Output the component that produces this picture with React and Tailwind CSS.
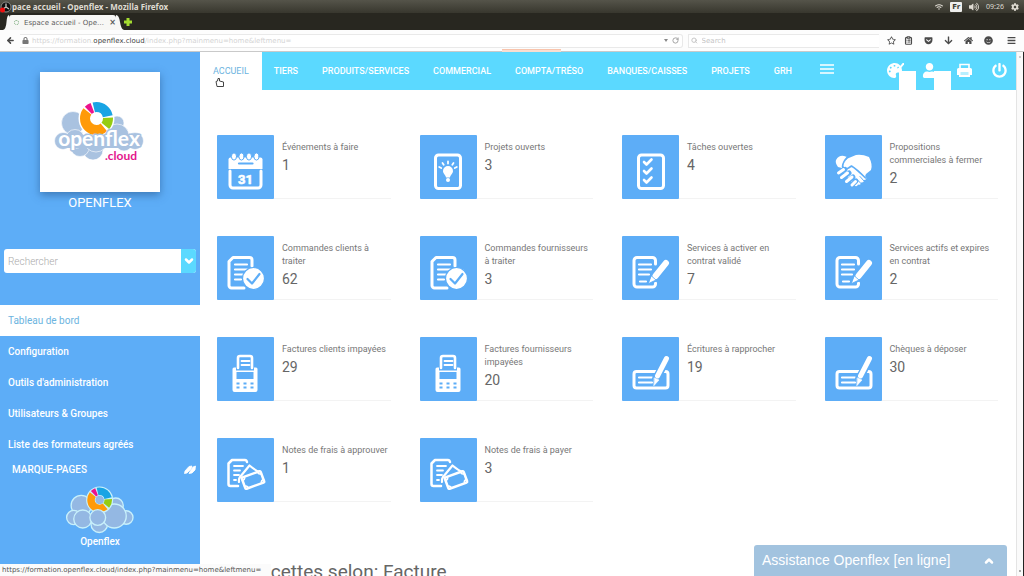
import React, { useState } from "react";
import { FaBars, FaHome, FaPowerOff, FaUser, FaLock, FaArrowDown, FaGetPocket, FaRegStar, FaPalette, FaCog, FaWifi, FaVolumeUp, FaSmile } from "react-icons/fa";
import { ArrowLeft, ChevronDown, ChevronUp, ClipboardList, RotateCw, Search } from "lucide-react";

const BLUE = "#5dadf7";

const NAV = ["TIERS", "PRODUITS/SERVICES", "COMMERCIAL", "COMPTA/TRÉSO", "BANQUES/CAISSES", "PROJETS", "GRH"];

const SIDE = ["Configuration", "Outils d'administration", "Utilisateurs & Groupes", "Liste des formateurs agréés"];

const CARDS = [
  { label: "Événements à faire", value: 1, icon: "calendar" },
  { label: "Projets ouverts", value: 3, icon: "idea" },
  { label: "Tâches ouvertes", value: 4, icon: "tasks" },
  { label: "Propositions commerciales à fermer", value: 2, icon: "deal" },
  { label: "Commandes clients à traiter", value: 62, icon: "order" },
  { label: "Commandes fournisseurs à traiter", value: 3, icon: "order" },
  { label: "Services à activer en contrat validé", value: 7, icon: "contract" },
  { label: "Services actifs et expires en contrat", value: 2, icon: "contract" },
  { label: "Factures clients impayées", value: 29, icon: "terminal" },
  { label: "Factures fournisseurs impayées", value: 20, icon: "terminal" },
  { label: "Écritures à rapprocher", value: 19, icon: "cheque" },
  { label: "Chèques à déposer", value: 30, icon: "cheque" },
  { label: "Notes de frais à approuver", value: 1, icon: "expense" },
  { label: "Notes de frais à payer", value: 3, icon: "expense" },
];

const ICONS = {
  calendar: (
    <>
      <path d="M13 36v14a3 3 0 0 0 3 3h25a3 3 0 0 0 3-3V36" />
      <path d="M11.500 34V24.500q0-2 2-2h30q2 0 2 2V34z" fill="#fff" stroke="none" />
      {[17, 24.5, 32, 39.5].map((x) => (
        <ellipse key={x} cx={x} cy="21.500" rx="2.600" ry="3.600" fill="#fff" stroke={BLUE} strokeWidth="1" />
      ))}
      <path d="M22 28.500h13.500" stroke={BLUE} strokeWidth="2.200" />
      <text x="28.500" y="48.500" textAnchor="middle" fill="#fff" stroke="#fff" strokeWidth="0.600" fontSize="13" fontWeight="700" fontFamily="Roboto, sans-serif">31</text>
    </>
  ),
  idea: (
    <>
      <rect x="15.500" y="20" width="25" height="33.500" rx="3" />
      <path d="M28 31a5 5 0 0 0-5 5c0 3 2.600 3.500 3 6.500h4c.4-3 3-3.500 3-6.500a5 5 0 0 0-5-5z" fill="#fff" stroke="none" />
      <circle cx="28" cy="45" r="2" fill="#fff" stroke="none" />
      <path d="M28 26.500v2M22.500 28l1.200 1.800M33.500 28l-1.200 1.800M19.200 32l2 1M36.800 32l-2 1" strokeWidth="1.800" />
    </>
  ),
  tasks: (
    <>
      <rect x="16.500" y="20" width="25" height="33.500" rx="3" />
      <path d="M22 27l2.500 2.500 5-5M22 36l2.500 2.500 5-5M22 45l2.500 2.500 5-5" strokeWidth="2.600" />
    </>
  ),
  deal: (
    <>
      <path d="M11 25q3-5 8-4l3 1-5 11-4-1q-3-4-2-7z" fill="#fff" stroke="none" />
      <path d="M18 31q2-7 7-8.500l6-2.500q6-1 13 2 4 8 2 13l-5 4q-3 8-6 6l-10-12q-4 3-6-1z" fill="#fff" stroke="none" />
      <path d="M17 35l4-3 8 1 12 9q1 3-2 3 0 3-3 2.500 0 3-3 2-1 3-4 1z" fill="#fff" stroke="none" />
      <path d="M22 22.500q-4 4-4.500 9 1 4 6 1.500l3-2q5 3 14 12" stroke={BLUE} strokeWidth="1.600" />
      <path d="M15 38l5-3.500M18 42.500l6-4.500M22 47l6-5M27 50l4-4" stroke={BLUE} strokeWidth="5" />
      <path d="M13.500 38l5-3.500M16.500 42.500l6-4.500M21.500 46.500l5.500-4.500M27 50l3.500-3.500" strokeWidth="3" />
      <path d="M32 44.500l5 5M35 41.500l4.500 5" stroke={BLUE} strokeWidth="1" />
    </>
  ),
  order: (
    <>
      <path d="M35 30v-6a2.500 2.500 0 0 0-2.500-2.500H16l-4 4V49.500A2.500 2.500 0 0 0 14.500 52H27" />
      <path d="M18 28.500h12M18 33.500h12M18 38.500h8M18 43.500h6" strokeWidth="2.200" />
      <circle cx="36.500" cy="42.500" r="11" fill="#fff" stroke={BLUE} strokeWidth="1.200" />
      <path d="M30.500 43l4.500 4.500 7.500-9.500" stroke={BLUE} strokeWidth="2.200" />
    </>
  ),
  contract: (
    <>
      <path d="M33.500 28v-3.500a3 3 0 0 0-3-3H15a3 3 0 0 0-3 3V48a3 3 0 0 0 3 3h15.500a3 3 0 0 0 3-3v-1" />
      <path d="M17 28.500h12M17 33.500h12M17 38.500h10M18 45.500h6" strokeWidth="2.200" />
      <path d="M44.500 27L32 42" stroke={BLUE} strokeWidth="8.500" />
      <path d="M44 27L33.500 40" strokeWidth="6" />
      <path d="M29.500 40l4.500 4-7.500 3.500z" fill="#fff" stroke={BLUE} strokeWidth="0.800" />
    </>
  ),
  terminal: (
    <>
      <path d="M21 31V21a2 2 0 0 1 2-2h10a2 2 0 0 1 2 2v10" strokeWidth="2.600" />
      <path d="M24.500 24h8M24.500 28h8" strokeWidth="1.800" />
      <path d="M17 30.500h2v3h18v-3h2q1.500 0 1.500 1.500v21q0 2-2 2h-21q-2 0-2-2V32q0-1.500 1.500-1.500z" fill="#fff" stroke="none" />
      <path d="M19.500 35h17v7h-17z" fill={BLUE} stroke="none" />
      <path d="M19.500 46.500h3M26.500 46.500h3M33.500 46.500h3M19.500 50.500h3M26.500 50.500h3M33.500 50.500h3" stroke={BLUE} strokeWidth="1.800" strokeLinecap="butt" />
    </>
  ),
  cheque: (
    <>
      <rect x="12" y="34.500" width="34" height="16.500" rx="2.500" />
      <path d="M17 40.500h13M17 45.500h13" strokeWidth="2.200" />
      <path d="M45 21.500L34 42" stroke={BLUE} strokeWidth="8" />
      <path d="M44.500 21.500L35.500 39" strokeWidth="5" />
      <path d="M32.500 41l4.500 2-5 5.500z" fill="#fff" stroke="#fff" strokeWidth="0.600" />
    </>
  ),
  expense: (
    <>
      <path d="M30 24q-.5-2-2-2H15l-3.500 3.500V46q0 2 2 2H21" strokeWidth="2.500" />
      <path d="M17 28h9M17 32.500h6M17 37h5M17 42h2" strokeWidth="1.800" />
      <path d="M22 44q-.5-3 1-5l9.500-11.500q6 5 10.500 7" strokeWidth="2.200" />
      <g transform="rotate(-20 36 42)">
        <rect x="26" y="36" width="20" height="12" rx="1" fill={BLUE} stroke="#fff" strokeWidth="2.500" />
        <path d="M26 39q3 0 3-3M46 39q-3 0-3-3M26 45q3 0 3 3M46 45q-3 0-3 3" strokeWidth="1.600" />
      </g>
    </>
  ),
};

function TileIcon({ name }) {
  return (
    <svg viewBox="0 0 57 64" className="h-16 w-[57px]" fill="none" stroke="#fff" strokeWidth="3" strokeLinecap="round" strokeLinejoin="round" aria-hidden="true">
      {ICONS[name]}
    </svg>
  );
}

// four-colour ring used in both logos
function Ring({ gap = "#fff" }) {
  return (
    <g fill="none" strokeWidth="10" transform="rotate(-90 56.500 46.500)">
      <circle cx="56.500" cy="46.500" r="11.500" stroke={gap} strokeWidth="13" />
      <circle cx="56.500" cy="46.500" r="11.500" pathLength="360" stroke="#18a4e4" strokeDasharray="92 268" strokeDashoffset="14" />
      <circle cx="56.500" cy="46.500" r="11.500" pathLength="360" stroke="#96cc12" strokeDasharray="44 316" strokeDashoffset="-86" />
      <circle cx="56.500" cy="46.500" r="11.500" pathLength="360" stroke="#ff9a08" strokeDasharray="168 192" strokeDashoffset="-140" />
      <circle cx="56.500" cy="46.500" r="11.500" pathLength="360" stroke="#ec128c" strokeDasharray="24 336" strokeDashoffset="-315" />
    </g>
  );
}

function Logo() {
  return (
    <svg viewBox="0 0 120 120" className="h-[120px] w-[120px]" role="img" aria-label="openflex.cloud">
      <g fill="#a9c2e0" stroke="#fff" strokeWidth="0.600">
        <circle cx="33" cy="51" r="11.500" />
        <circle cx="77" cy="51" r="7" />
        <circle cx="53" cy="78" r="10" />
        <circle cx="40" cy="75" r="9.500" />
        <circle cx="23" cy="69" r="8.500" />
        <circle cx="95" cy="69" r="8.500" />
        <circle cx="84" cy="71" r="8" />
        <circle cx="77" cy="64" r="12" />
        <circle cx="35" cy="67" r="9.500" />
        <circle cx="56" cy="68" r="12" />
      </g>
      <path d="M24 63h70v13H24z" fill="#a9c2e0" />
      <Ring />
      <text x="59" y="74" textAnchor="middle" fontFamily="Lato, sans-serif" fontWeight="700" fontSize="21" fill="#fff" stroke="#a9c2e0" strokeWidth="3" strokeLinejoin="round" paintOrder="stroke">openflex</text>
      <text x="81" y="88" textAnchor="middle" fontFamily="Lato, sans-serif" fontWeight="700" fontSize="12" fill="#e3168c">.cloud</text>
    </svg>
  );
}

function CloudIcon() {
  return (
    <svg viewBox="11 28 92 64" className="h-12 w-[70px]" aria-hidden="true">
      <g fill="#94b8e3" stroke="#c8f0fb" strokeWidth="1.800">
        <circle cx="32" cy="54" r="13.500" />
        <circle cx="78" cy="54" r="10" />
        <circle cx="22" cy="70" r="9.500" />
        <circle cx="92" cy="70" r="9" />
        <circle cx="56" cy="79" r="11" />
        <circle cx="34" cy="72" r="12" />
        <circle cx="76" cy="68" r="16" />
      </g>
      <Ring gap="#c8f0fb" />
      <circle cx="56.500" cy="46.500" r="5.500" fill="#94b8e3" />
      <circle cx="54" cy="70" r="10.500" fill="#94b8e3" stroke="#c8f0fb" strokeWidth="1.800" />
    </svg>
  );
}

function Browser() {
  return (
    <header className="relative shrink-0 font-['DejaVu_Sans',sans-serif] text-[7px] leading-[10px]">
      <div className="flex h-[13px] items-center bg-linear-to-b from-[#55544a] to-[#38372e] pr-[5px] text-[#dfdbd2]">
        <svg viewBox="0 0 12 12" className="h-3 w-3 shrink-0" aria-hidden="true">
          <circle cx="6" cy="6" r="5" fill="#111" stroke="#8b8b85" />
          <path d="M6 6V2.500M6 6l3 2M6 6L3 8" stroke="#c9c9c4" strokeWidth="1.300" />
          <circle cx="2.500" cy="9" r="2.500" fill="#f01010" />
        </svg>
        <h1 className="font-['Noto_Sans',sans-serif] text-[8px] font-bold">pace accueil - Openflex - Mozilla Firefox</h1>
        <div className="ml-auto flex items-center gap-[7px]">
          <FaWifi className="h-2 w-2" />
          <span className="rounded-[1px] bg-[#eeeeec] px-[2px] font-bold text-[#3a3932]">Fr</span>
          <FaVolumeUp className="h-[10px] w-[10px]" />
          <span className="font-['Noto_Sans',sans-serif]">09:26</span>
          <FaCog className="h-2 w-2" />
        </div>
      </div>
      <div className="flex h-[17px] items-end bg-[#282720] pl-[3px]">
        <svg viewBox="0 0 6 15" className="h-[15px] w-[6px]" aria-hidden="true"><path d="M0 15Q3 14 3.500 7T6 0V15z" fill="#f7f7f5" /></svg>
        <div className="flex h-[15px] w-[107px] items-center rounded-t-[3px] bg-[#f7f7f5] pl-[5px] text-[#5c5c5c]">
          <span className="mr-[5px] h-[5px] w-[5px] rounded-full border border-dotted border-[#7bab7b]" />
          <span>Espace accueil - Ope…</span>
          <button className="ml-auto text-[8px] font-bold" aria-label="Fermer l'onglet">×</button>
        </div>
        <svg viewBox="0 0 8 15" className="h-[15px] w-2" aria-hidden="true"><path d="M0 0Q3 0 4 7T8 15H0z" fill="#f7f7f5" /></svg>
        <button className="flex h-[15px] items-center pb-px" aria-label="Nouvel onglet">
          <svg viewBox="0 0 8 8" className="h-2 w-2"><path d="M4 0v8M0 4h8" stroke="#a4dc30" strokeWidth="3" /></svg>
        </button>
      </div>
      <div className="flex h-[22px] items-center border-b border-[#c9c9c9] bg-[#fdfdfd] pl-[6px] pr-2 text-[#4a4a4a]">
        <button aria-label="Précédent"><ArrowLeft className="h-[9px] w-[9px]" strokeWidth={4} /></button>
        <div className="relative ml-[5px] flex h-[14px] min-w-0 flex-1 items-center rounded-r-[3px] border-y border-r border-[#e9e9e9] bg-white pl-[2px] pr-[3px]">
          <FaLock className="mr-[3px] h-[7px] w-[7px] text-[#777]" />
          <span className="text-[#d4d4d4]">https://formation.</span>
          <span className="text-[#444]">openflex.cloud</span>
          <span className="text-[#d4d4d4]">/index.php?mainmenu=home&leftmenu=</span>
          <input aria-label="Adresse" className="absolute inset-0 bg-transparent outline-none" />
          <span className="ml-auto mr-1 border-x-2 border-t-[3px] border-x-transparent border-t-[#888]" />
          <RotateCw className="h-[7px] w-[7px] text-[#999]" strokeWidth={3} />
        </div>
        <label className="ml-[5px] flex h-[14px] w-[191px] items-center gap-1 border-y border-l border-[#e9e9e9] bg-white pl-[2px] text-[#bbb]">
          <Search className="h-[7px] w-[7px]" strokeWidth={3} />
          <input placeholder="Search" aria-label="Search" className="w-full outline-none placeholder:text-[#c4c4c4]" />
        </label>
        <div className="ml-2 flex items-center gap-[11px]">
          <FaRegStar className="h-[9px] w-[9px]" />
          <ClipboardList className="-ml-[3px] h-[9px] w-[9px]" strokeWidth={3} />
          <FaGetPocket className="h-[9px] w-[9px]" />
          <FaArrowDown className="h-[9px] w-[9px]" />
          <FaHome className="h-[9px] w-[9px]" />
          <FaSmile className="h-[9px] w-[9px]" />
          <FaBars className="ml-[3px] h-[9px] w-[9px]" />
        </div>
      </div>
      <span className="absolute bottom-0 left-[49%] h-[3px] w-[59px] border-t border-[#f8c4ac] bg-[#f9ddd0]" />
    </header>
  );
}

function Sidebar() {
  const [query, setQuery] = useState("");
  return (
    <aside className="flex w-[200px] shrink-0 flex-col bg-[#5dadf7] text-[10px] leading-[15px] text-white">
      <div className="mx-auto mt-5 bg-white shadow-[0_3px_8px_rgba(30,70,120,0.5)]"><Logo /></div>
      <div className="mt-[3px] text-center text-[13px]">OPENFLEX</div>
      <form className="mx-1 mt-[39px] flex h-6 overflow-hidden rounded-[3px] bg-white" onSubmit={(e) => e.preventDefault()}>
        <input value={query} onChange={(e) => setQuery(e.target.value)} placeholder="Rechercher" aria-label="Rechercher" className="min-w-0 flex-1 px-1 font-light text-[#666] outline-none placeholder:text-[#aaa]" />
        <button className="flex w-[15px] items-center justify-center bg-[#5bd9ff]" aria-label="Options de recherche"><ChevronDown className="h-3 w-3" strokeWidth={5} /></button>
      </form>
      <nav className="mt-8 flex flex-col font-medium">
        <a href="#" className="bg-white px-2 py-2 font-normal text-[#6cb4e0]">Tableau de bord</a>
        {SIDE.map((s) => (
          <a key={s} href="#" className="px-2 py-2">{s}</a>
        ))}
      </nav>
      <div className="flex items-center justify-between pl-3 pr-1 pt-[2px] font-medium">
        <span>MARQUE-PAGES</span>
        <svg viewBox="0 0 12 10" className="h-[10px] w-3" fill="#fff" stroke="#fff" strokeWidth="0.800" strokeLinejoin="round" aria-hidden="true">
          <path d="M0.500 8.500L1 6 5 1.500 8 1 7 4 3 8zM5 8.500l1-2 3-4.500 2.500-1-.5 4-3 3z" />
        </svg>
      </div>
      <a href="#" className="mt-[9px] flex flex-col items-center font-medium">
        <CloudIcon />
        Openflex
      </a>
    </aside>
  );
}

function TopNav() {
  return (
    <nav className="flex h-[38px] bg-[#5bd9ff] text-[9px] font-medium text-white">
      <a href="#" className="relative flex items-center bg-white px-3 font-normal text-[#6cb4e0]">
        <span className="px-px pt-[2px]">ACCUEIL</span>
        <svg viewBox="0 0 10 12" className="absolute left-[15px] top-[25px] h-3 w-[10px]" fill="#fff" stroke="#444" strokeLinejoin="round" aria-hidden="true">
          <path d="M1 4.500l1.500-.5L3 1.500l1.500 0V4l4 1V9.500H2z" />
        </svg>
      </a>
      {NAV.map((n) => (
        <a key={n} href="#" className="flex items-center px-3 pt-[2px]">{n}</a>
      ))}
      <button className="flex items-center px-4 pb-1" aria-label="Menu">
        <svg viewBox="0 0 14 10" className="h-[10px] w-[14px]"><path d="M0 1h14M0 5h14M0 9h14" stroke="#fff" strokeWidth="1.600" /></svg>
      </button>
      <div className="ml-auto flex items-center gap-5 pb-[2px] pr-[9px]">
        <button className="relative" aria-label="Thème">
          <FaPalette className="h-[15px] w-[15px]" />
          <svg viewBox="0 0 6 8" className="absolute left-[11px] top-0 h-2 w-[6px]" aria-hidden="true"><path d="M0 7L6 0" stroke="#fff" strokeWidth="2" /></svg>
          <span className="absolute left-3 top-2 h-5 w-[17px] bg-white" />
        </button>
        <button className="relative" aria-label="Utilisateur">
          <FaUser className="h-[15px] w-[15px]" />
          <span className="absolute left-3 top-2 h-5 w-[17px] bg-white" />
        </button>
        <button aria-label="Imprimer">
          <svg viewBox="0 0 15 15" className="h-[15px] w-[15px]" aria-hidden="true">
            <path d="M3 6V1.500h9V6" fill="none" stroke="#fff" strokeWidth="1.600" />
            <path d="M1.500 5h12Q15 5 15 6.500V12h-2v2H2v-2H0V6.500Q0 5 1.500 5z" fill="#fff" />
            <path d="M3.500 9h8v3h-8z" fill="#b8efff" />
          </svg>
        </button>
        <button aria-label="Déconnexion"><FaPowerOff className="h-[15px] w-[15px]" /></button>
      </div>
    </nav>
  );
}

export default function App() {
  return (
    <div className="relative flex h-screen flex-col overflow-hidden bg-white font-[Roboto,sans-serif]">
      <Browser />
      <div className="flex min-h-0 flex-1">
        <Sidebar />
        <div className="min-w-0 flex-1 overflow-hidden">
          <TopNav />
          <main className="mt-[45px] pl-[17px] pr-[18px]">
            <div className="grid grid-cols-4 gap-x-[29px] gap-y-[37px]">
              {CARDS.map((c) => (
                <a key={c.label} href="#" className="flex h-16 border-b border-[#f3f3f3] text-[#777]">
                  <span className="h-16 w-[57px] shrink-0 rounded-[1px] bg-[#5dadf7]"><TileIcon name={c.icon} /></span>
                  <span className="flex flex-col pl-2 pt-[6px]">
                    <span className="text-[9px] leading-[13px]">{c.label}</span>
                    <span className="text-[14px] leading-[22px] text-[#666]">{c.value}</span>
                  </span>
                </a>
              ))}
            </div>
            <h2 className="mt-[58px] pl-8 text-[19px] leading-6 text-[#666]">Recettes selon: Facture</h2>
          </main>
        </div>
        <div className="flex w-2 shrink-0 flex-col justify-between border-l border-r border-l-[#e4e4e4] border-r-[#222] bg-[#fafafa] py-1">
          <span className="mx-auto h-[2px] w-[2px] bg-[#ccc]" />
          <span className="mx-auto h-[2px] w-[2px] bg-[#aaa]" />
        </div>
      </div>
      <div className="absolute bottom-0 left-0 h-3 bg-[#fbfbfb] pl-[2px] pr-[10px] font-['DejaVu_Sans',sans-serif] text-[7px] leading-[12px] text-[#555]">
        https://formation.openflex.cloud/index.php?mainmenu=home&leftmenu=
      </div>
      <button className="absolute bottom-0 right-[17px] flex h-[31px] w-[253px] items-center justify-between rounded-t-[3px] bg-[#a2c3df] pl-2 pr-3 font-['Liberation_Sans',sans-serif] text-[14px] text-white">
        Assistance Openflex [en ligne]
        <ChevronUp className="h-3 w-3" strokeWidth={5} />
      </button>
    </div>
  );
}
